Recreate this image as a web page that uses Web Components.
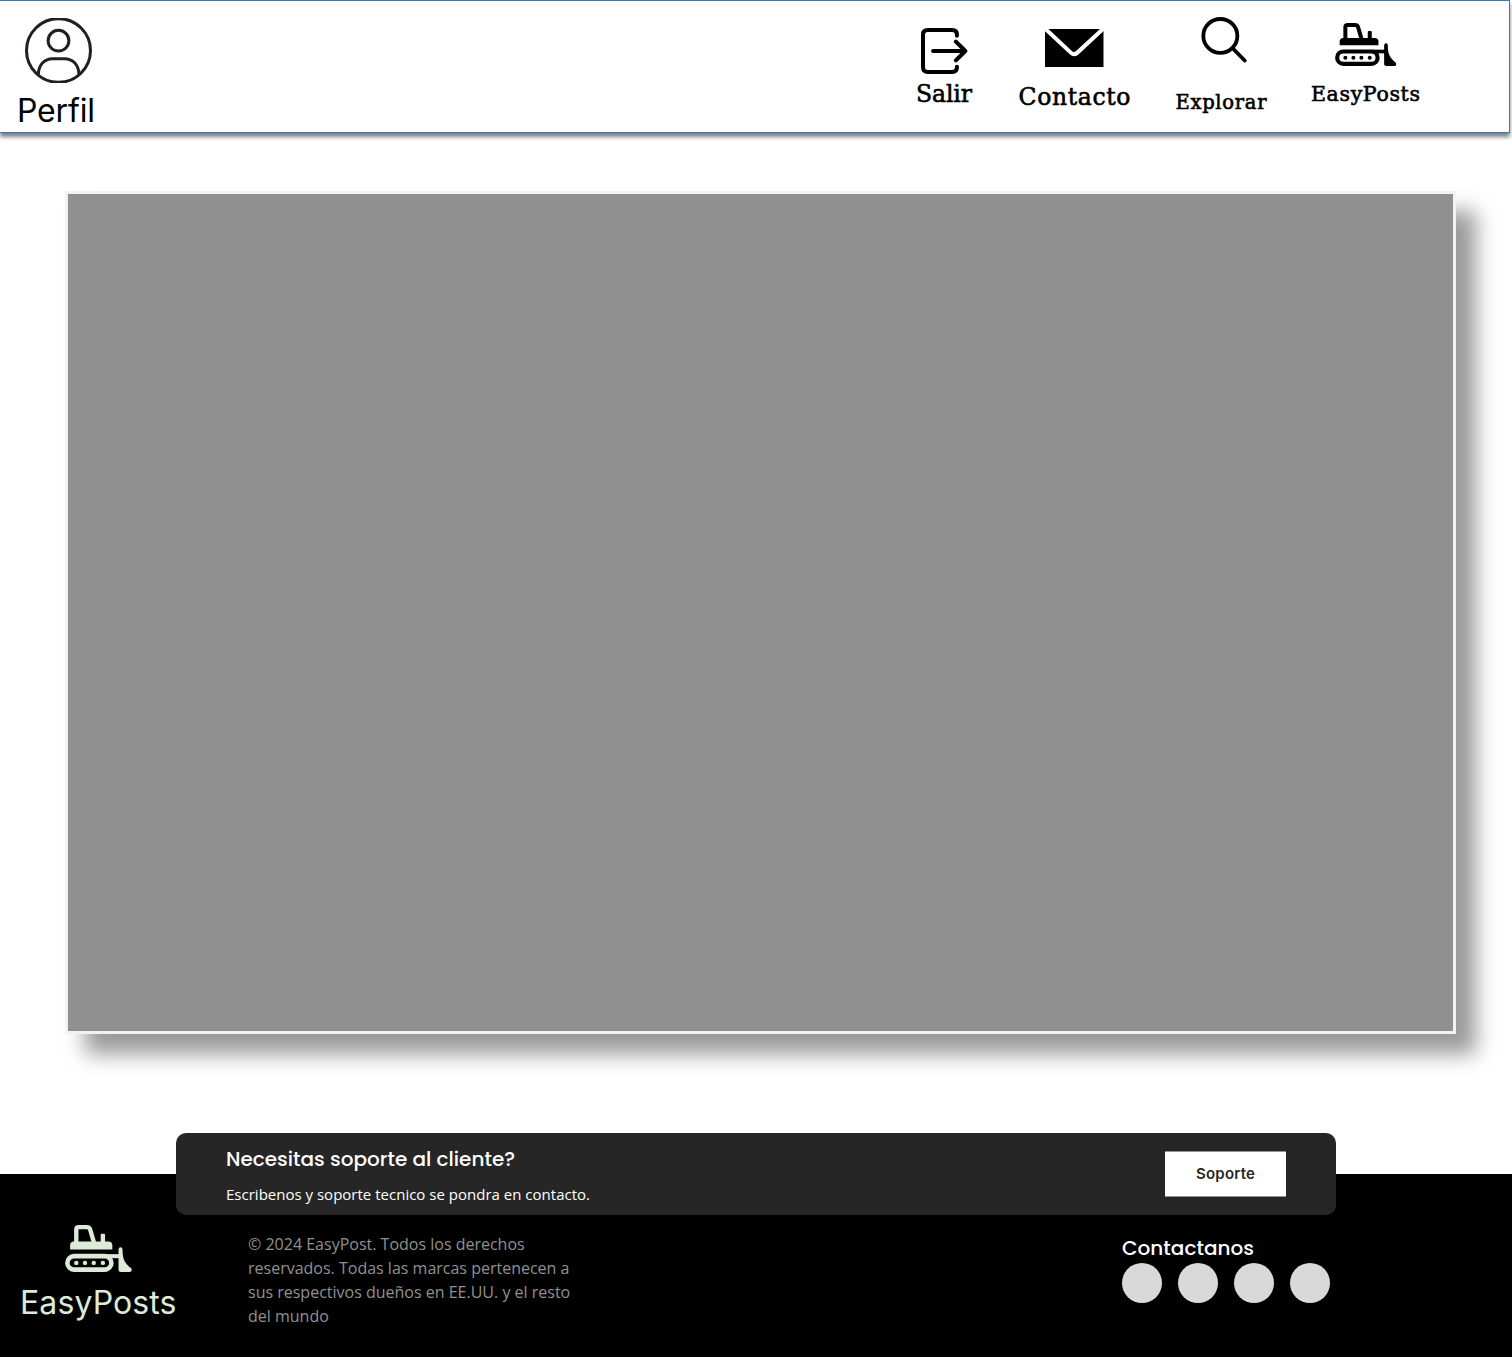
<!DOCTYPE html>
<html lang="es">
<head>
<meta charset="utf-8">
<title>EasyPosts</title>
<style>
html,body{margin:0;padding:0;background:#fff}
body{width:1512px;height:1357px;overflow:hidden;font-family:Inter,"Liberation Sans",sans-serif}
</style>
</head>
<body>
<easy-app></easy-app>
<script>
// One line of text whose tracking is adjusted to fill a given width.
class FitText extends HTMLElement {
  connectedCallback() {
    const root = this.attachShadow({mode: 'open'});
    root.innerHTML = `<style>:host{display:block;white-space:nowrap}span{display:inline-block}</style><span><slot></slot></span>`;
    const span = root.querySelector('span');
    const width = parseFloat(this.getAttribute('width'));
    const count = this.textContent.length;
    this.style.width = width + 'px';
    const natural = span.getBoundingClientRect().width;
    span.style.letterSpacing = ((width - natural) / (count - 1)).toFixed(3) + 'px';
  }
}

const ICONS = {
  dozer: ['0 0 184 129', `<path d="M14 67V56Q14 45 25 45H119Q130 45 130 56V67Z" fill="currentColor"/>
    <path d="M31 50V12Q31 6 38 6H60Q67 6 69 12L80 50" fill="none" stroke="currentColor" stroke-width="12"/>
    <path d="M98 48V27Q98 24 101 24H107Q110 24 110 27V48Z" fill="currentColor"/>
    <rect x="6.5" y="85.5" width="121" height="37" rx="18.5" fill="none" stroke="currentColor" stroke-width="12.5"/>
    <g fill="currentColor"><circle cx="31" cy="104" r="6"/><circle cx="55" cy="104" r="6"/><circle cx="79" cy="104" r="6"/><circle cx="104" cy="104" r="6"/>
    <path d="M112 80H150V91H112Z"/><path d="M147 67Q147 61 153 61Q158 61 158 67C158 92 163 105 182 119Q186 129 177 129H153Q147 129 147 123Z"/></g>`],
  exit: ['0 0 140 138', `<g fill="none" stroke="currentColor" stroke-width="12" stroke-linecap="round" stroke-linejoin="round"><path d="M107 23V20Q107 6 93 6H20Q6 6 6 20V118Q6 132 20 132H93Q107 132 107 118V116"/><path d="M36 69H131M104 41L132 69L104 97"/></g>`],
  mail: ['0 0 175 113', `<path d="M0 0H175V113H0Z" fill="currentColor"/><path d="M-6 -7L78 71Q87 79 96 71L181 -7" fill="none" stroke="#fff" stroke-width="12"/>`],
  search: ['0 0 138 137', `<g fill="none" stroke="currentColor" stroke-width="11.5" stroke-linecap="round"><circle cx="58" cy="57" r="51"/><path d="M95 94L131 131"/></g>`],
  user: ['0 0 200 195', `<g fill="none" stroke="#231f20" stroke-width="9"><circle cx="100" cy="97.5" r="95.5"/><circle cx="100" cy="68" r="31"/><path d="M40 169C40 139 60 122 82 122H118C141 122 161 139 161 169"/></g>`]
};
class EasyIcon extends HTMLElement {
  connectedCallback() {
    const [box, art] = ICONS[this.getAttribute('name')];
    this.attachShadow({mode: 'open'}).innerHTML =
      `<style>:host{display:block;flex:none}svg{display:block;width:100%;height:100%}</style><svg viewBox="${box}" preserveAspectRatio="none">${art}</svg>`;
  }
}

class EasyHeader extends HTMLElement {
  connectedCallback() {
    this.attachShadow({mode: 'open'}).innerHTML = `<style>
      :host{display:flex;justify-content:space-between;box-sizing:border-box;width:1510px;height:133px;padding-right:89px;
        border:1px solid #307abd;border-left:0;background:#fff;box-shadow:0 4px 4px rgba(0,0,0,.5)}
      .profile{padding:17px 0 0 17px}
      .profile easy-icon{width:67px;height:65px;margin-left:7.5px}
      .profile fit-text{font-size:32px;line-height:40px;margin-top:8px}
      nav{display:flex;font-family:"DejaVu Serif","Liberation Serif",serif;font-weight:400;line-height:30px;-webkit-text-stroke:.6px #000}
      nav a{display:flex;flex-direction:column;align-items:center;color:#000}
      .exit{padding-top:26.5px;margin-right:46.5px;font-size:23.5px}
      .exit easy-icon{width:47px;height:46px;margin:0 0 5.5px 1px}
      .mail{padding-top:28px;margin-right:45px;font-size:23.5px}
      .mail easy-icon{width:58.5px;height:38px;margin-bottom:15px}
      .search{padding-top:16px;margin-right:44.5px;font-size:19.5px}
      .search easy-icon{width:46px;height:45.5px;margin:0 0 25px 5px}
      .brand{padding-top:22px;font-size:20.5px}
      .brand easy-icon{width:61.5px;height:43px;margin:0 0 13px 1px}
      </style>
      <div class="profile"><easy-icon name="user"></easy-icon><fit-text width="78">Perfil</fit-text></div>
      <nav>
        <a class="exit"><easy-icon name="exit"></easy-icon><fit-text width="56">Salir</fit-text></a>
        <a class="mail"><easy-icon name="mail"></easy-icon><fit-text width="112">Contacto</fit-text></a>
        <a class="search"><easy-icon name="search"></easy-icon><fit-text width="91">Explorar</fit-text></a>
        <a class="brand"><easy-icon name="dozer"></easy-icon><fit-text width="109">EasyPosts</fit-text></a>
      </nav>`;
  }
}

class EasyCanvas extends HTMLElement {
  connectedCallback() {
    this.attachShadow({mode: 'open'}).innerHTML = `<style>:host{display:block;box-sizing:border-box;width:1391px;height:843px;margin:58px 0 0 65px;
      background:#909090;border:3px solid #f2f2f2;box-shadow:20px 20px 20px rgba(0,0,0,.4)}</style><slot></slot>`;
  }
}

class SupportCard extends HTMLElement {
  connectedCallback() {
    this.attachShadow({mode: 'open'}).innerHTML = `<style>
      :host{display:flex;justify-content:space-between;align-items:flex-start;box-sizing:border-box;width:1160px;height:82px;
        padding:0 50px;border-radius:10px;background:#262626;color:#fff}
      .title{font:500 20px/30px Poppins,Inter,sans-serif;margin-top:11px}
      .sub{font:400 15px/24px "Open Sans",sans-serif;margin-top:8px}
      button{width:121px;height:46px;margin:18px 0 0;padding:0;border:solid #929292;border-width:1px 0;background:#fff;
        color:#262626;font:600 15px/22px Inter,sans-serif;display:flex;justify-content:center;align-items:center}
      </style>
      <div><fit-text class="title" width="289">Necesitas soporte al cliente?</fit-text>
      <fit-text class="sub" width="364">Escribenos y soporte tecnico se pondra en contacto.</fit-text></div>
      <button><fit-text width="59">Soporte</fit-text></button>`;
  }
}

class EasyFooter extends HTMLElement {
  connectedCallback() {
    this.attachShadow({mode: 'open'}).innerHTML = `<style>
      :host{display:flex;flex-direction:column;height:183px;margin-top:140px;background:#000}
      support-card{margin:-41px 0 0 176px}
      .row{display:flex;align-items:flex-start}
      .logo{width:157px;margin:10px 0 0 20px;color:#dcead7}
      .logo easy-icon{width:67px;height:47px;margin-left:45px}
      .logo fit-text{font-size:32px;font-weight:400;line-height:40px;margin-top:11px}
      p{width:340px;margin:17px 0 0 71px;font:400 16px/24px "Open Sans",sans-serif;color:#919191}
      .contact{margin:18px 0 0 534px;color:#fff}
      .contact fit-text{font:500 20px/30px Poppins,Inter,sans-serif}
      .dots{display:flex;gap:16px}
      i{width:40px;height:40px;border-radius:50%;background:#d9d9d9}
      </style>
      <support-card></support-card>
      <div class="row">
        <div class="logo"><easy-icon name="dozer"></easy-icon><fit-text width="156.5">EasyPosts</fit-text></div>
        <p>© 2024 EasyPost. Todos los derechos<br>reservados. Todas las marcas pertenecen a<br>sus respectivos dueños en EE.UU. y el resto<br>del mundo</p>
        <div class="contact"><fit-text width="132">Contactanos</fit-text><div class="dots"><i></i><i></i><i></i><i></i></div></div>
      </div>`;
  }
}

class EasyApp extends HTMLElement {
  connectedCallback() {
    this.attachShadow({mode: 'open'}).innerHTML = `<style>:host{display:flex;flex-direction:column;width:1512px;height:1357px;background:#fff;color:#000}</style>
      <easy-header></easy-header><easy-canvas></easy-canvas><easy-footer></easy-footer>`;
  }
}
customElements.define('fit-text', FitText);
customElements.define('easy-icon', EasyIcon);
customElements.define('easy-header', EasyHeader);
customElements.define('easy-canvas', EasyCanvas);
customElements.define('support-card', SupportCard);
customElements.define('easy-footer', EasyFooter);
customElements.define('easy-app', EasyApp);
</script>
</body>
</html>
